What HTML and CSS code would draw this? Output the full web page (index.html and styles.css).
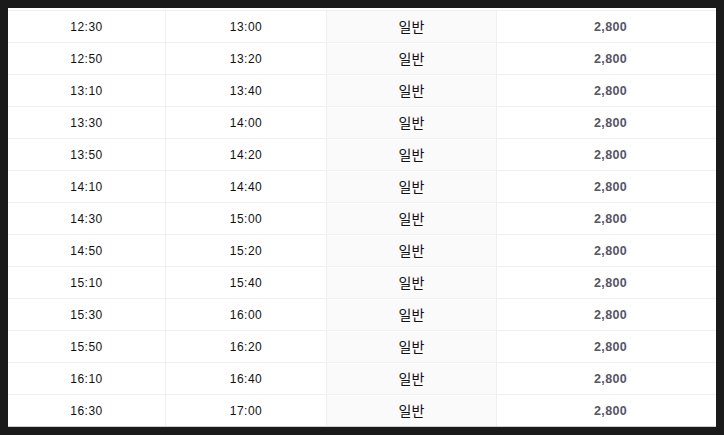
FILE: index.html
```html
<!DOCTYPE html>
<html lang="ko">
<head>
<meta charset="utf-8">
<link rel="stylesheet" href="styles.css">
</head>
<body>
<div class="table">
  <div class="row"><div class="c t">12:30</div><div class="c t">13:00</div><div class="c k">일반</div><div class="c p">2,800</div></div>
  <div class="row"><div class="c t">12:50</div><div class="c t">13:20</div><div class="c k">일반</div><div class="c p">2,800</div></div>
  <div class="row"><div class="c t">13:10</div><div class="c t">13:40</div><div class="c k">일반</div><div class="c p">2,800</div></div>
  <div class="row"><div class="c t">13:30</div><div class="c t">14:00</div><div class="c k">일반</div><div class="c p">2,800</div></div>
  <div class="row"><div class="c t">13:50</div><div class="c t">14:20</div><div class="c k">일반</div><div class="c p">2,800</div></div>
  <div class="row"><div class="c t">14:10</div><div class="c t">14:40</div><div class="c k">일반</div><div class="c p">2,800</div></div>
  <div class="row"><div class="c t">14:30</div><div class="c t">15:00</div><div class="c k">일반</div><div class="c p">2,800</div></div>
  <div class="row"><div class="c t">14:50</div><div class="c t">15:20</div><div class="c k">일반</div><div class="c p">2,800</div></div>
  <div class="row"><div class="c t">15:10</div><div class="c t">15:40</div><div class="c k">일반</div><div class="c p">2,800</div></div>
  <div class="row"><div class="c t">15:30</div><div class="c t">16:00</div><div class="c k">일반</div><div class="c p">2,800</div></div>
  <div class="row"><div class="c t">15:50</div><div class="c t">16:20</div><div class="c k">일반</div><div class="c p">2,800</div></div>
  <div class="row"><div class="c t">16:10</div><div class="c t">16:40</div><div class="c k">일반</div><div class="c p">2,800</div></div>
  <div class="row"><div class="c t">16:30</div><div class="c t">17:00</div><div class="c k">일반</div><div class="c p">2,800</div></div>
</div>
</body>
</html>
```
FILE: styles.css
```css
html, body {
  margin: 0;
  padding: 0;
  background: #1a1a1a;
}
body {
  padding: 8px;
}
.table {
  width: 708px;
  background: #fff;
  padding-top: 2px;
  border-bottom: 1px solid #cfcfcf;
}
.row {
  display: grid;
  grid-template-columns: 158px 161px 170px 219px;
  height: 31px;
  border-top: 1px solid #f0f0f0;
}
.c {
  display: flex;
  align-items: center;
  justify-content: center;
  border-right: 1px solid #f0f0f0;
  font-family: "Liberation Sans", Arial, sans-serif;
  font-size: 12px;
  color: #111;
}
.c:last-child {
  border-right: none;
}
.t {
  letter-spacing: 0.5px;
}
.k {
  background: #fafafa;
  font-family: "Noto Sans CJK KR", "Noto Sans", sans-serif;
  font-size: 14px;
  color: #111;
  padding-bottom: 2px;
}
.p {
  padding-left: 8px;
  font-weight: bold;
  font-size: 12.5px;
  color: #555566;
  letter-spacing: 0.3px;
}
```
